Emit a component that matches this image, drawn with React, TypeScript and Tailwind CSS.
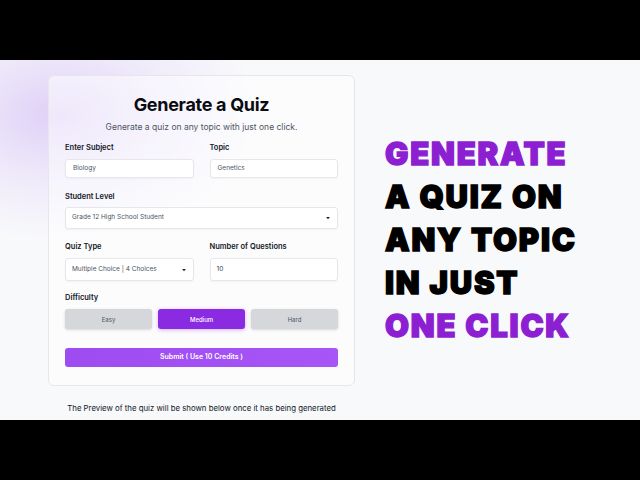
import React from 'react';

const Label: React.FC<{ children: React.ReactNode }> = ({ children }) => (
  <div className="text-[7.5px] leading-[10px] font-semibold text-[#111827] mb-[6px]">{children}</div>
);

const Caret = () => (
  <svg className="w-[6px] h-[6px]" viewBox="0 0 10 10">
    <path d="M2 3.5h6L5 7z" fill="#111827" />
  </svg>
);

const App: React.FC = () => {
  return (
    <div className="w-[640px] h-[480px] bg-black flex flex-col overflow-hidden" style={{ fontFamily: 'Inter, "Noto Sans", sans-serif' }}>
      <div className="h-[60px] shrink-0 bg-black" />

      <div className="h-[360px] shrink-0 relative overflow-hidden bg-[#f8f9fb] flex">
        {/* purple glow behind the card */}
        <div className="absolute -left-[140px] -top-[70px] w-[400px] h-[250px] rounded-full pointer-events-none bg-[radial-gradient(closest-side,rgba(222,208,247,1),rgba(232,222,249,0.6)_50%,rgba(248,249,251,0)_100%)]" />

        {/* Left: form */}
        <div className="relative w-[370px] pl-[48px] pt-[15px] flex flex-col">
          <div className="w-[307px] h-[311px] bg-white/50 border border-[#e6e7eb] rounded-[6px] px-[16px] pt-[17px] flex flex-col">
            <h1 className="text-center text-[18px] leading-[24px] font-bold text-[#0b0b12] tracking-[-0.3px]">Generate a Quiz</h1>
            <p className="text-center text-[8.5px] leading-[12px] text-[#4b5563] mt-[4px]">
              Generate a quiz on any topic with just one click.
            </p>

            <div className="grid grid-cols-2 gap-x-[16px] mt-[10px]">
              <div>
                <Label>Enter Subject</Label>
                <div className="h-[19px] bg-white border border-[#e5e7eb] rounded-[3px] shadow-[0_1px_2px_rgba(0,0,0,0.04)] px-[7px] flex items-center text-[6.5px] text-[#4b5563]">Biology</div>
              </div>
              <div>
                <Label>Topic</Label>
                <div className="h-[19px] bg-white border border-[#e5e7eb] rounded-[3px] shadow-[0_1px_2px_rgba(0,0,0,0.04)] px-[7px] flex items-center text-[6.5px] text-[#4b5563]">Genetics</div>
              </div>
            </div>

            <div className="mt-[14px]">
              <Label>Student Level</Label>
              <div className="h-[22px] -mt-[1px] bg-white border border-[#e5e7eb] rounded-[3px] shadow-[0_1px_2px_rgba(0,0,0,0.04)] pl-[6px] pr-[6px] flex items-center justify-between text-[6.5px] text-[#4b5563]">
                <span>Grade 12 High School Student</span>
                <Caret />
              </div>
            </div>

            <div className="grid grid-cols-2 gap-x-[16px] mt-[13px]">
              <div>
                <Label>Quiz Type</Label>
                <div className="h-[23px] bg-white border border-[#e5e7eb] rounded-[3px] shadow-[0_1px_2px_rgba(0,0,0,0.04)] pl-[6px] pr-[6px] flex items-center justify-between text-[6.5px] text-[#4b5563]">
                  <span>Multiple Choice | 4 Choices</span>
                  <Caret />
                </div>
              </div>
              <div>
                <Label>Number of Questions</Label>
                <div className="h-[23px] bg-white border border-[#e5e7eb] rounded-[3px] shadow-[0_1px_2px_rgba(0,0,0,0.04)] px-[6px] flex items-center text-[6.5px] text-[#374151]">10</div>
              </div>
            </div>

            <div className="mt-[12px]">
              <Label>Difficulty</Label>
              <div className="grid grid-cols-3 gap-[6px]">
                <button className="h-[20px] rounded-[3px] bg-[#d6d7db] shadow-[0_1px_3px_rgba(0,0,0,0.15)] text-[6px] text-[#4b5563]">Easy</button>
                <button className="h-[20px] rounded-[3px] bg-[#8a2be2] shadow-[0_1px_4px_rgba(138,43,226,0.35)] text-[6px] font-medium text-white">Medium</button>
                <button className="h-[20px] rounded-[3px] bg-[#d6d7db] shadow-[0_1px_3px_rgba(0,0,0,0.15)] text-[6px] text-[#4b5563]">Hard</button>
              </div>
            </div>

            <button className="mt-[19px] h-[19px] rounded-[3px] bg-gradient-to-r from-[#9d4cf0] to-[#a855f7] text-white text-[7px] font-semibold">
              Submit ( Use 10 Credits )
            </button>
          </div>

          <p className="w-[307px] text-center text-[7.8px] leading-[10px] text-[#111827] mt-[17px]">
            The Preview of the quiz will be shown below once it has being generated
          </p>
        </div>

        {/* Right: headline */}
        <div className="relative pl-[15px] pt-[72px] text-[31px] leading-[43px] font-black tracking-[1.8px] uppercase [-webkit-text-stroke:1.4px_currentColor]">
          <div className="text-[#8c1fd1]">Generate</div>
          <div className="text-black">A Quiz On</div>
          <div className="text-black">Any Topic</div>
          <div className="text-black">In Just</div>
          <div className="text-[#8c1fd1]">One Click</div>
        </div>
      </div>

      <div className="h-[60px] shrink-0 bg-black" />
    </div>
  );
};

export default App;
